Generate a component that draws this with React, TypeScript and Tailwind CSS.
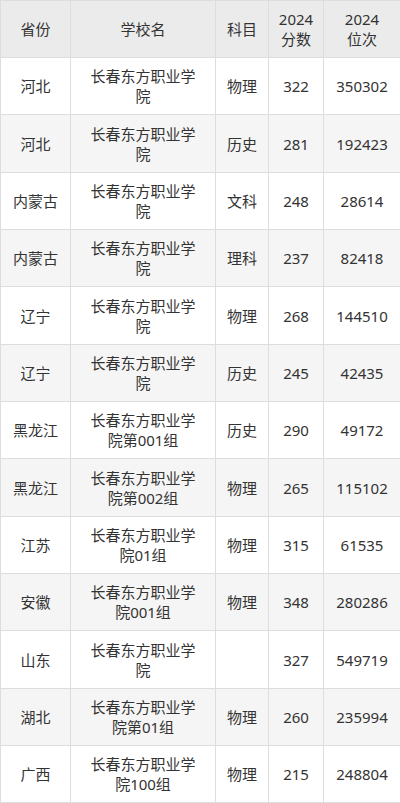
import React from "react";

const rows: [string, string, string, string, string][] = [
  ["河北", "长春东方职业学院", "物理", "322", "350302"],
  ["河北", "长春东方职业学院", "历史", "281", "192423"],
  ["内蒙古", "长春东方职业学院", "文科", "248", "28614"],
  ["内蒙古", "长春东方职业学院", "理科", "237", "82418"],
  ["辽宁", "长春东方职业学院", "物理", "268", "144510"],
  ["辽宁", "长春东方职业学院", "历史", "245", "42435"],
  ["黑龙江", "长春东方职业学院第001组", "历史", "290", "49172"],
  ["黑龙江", "长春东方职业学院第002组", "物理", "265", "115102"],
  ["江苏", "长春东方职业学院01组", "物理", "315", "61535"],
  ["安徽", "长春东方职业学院001组", "物理", "348", "280286"],
  ["山东", "长春东方职业学院", "", "327", "549719"],
  ["湖北", "长春东方职业学院第01组", "物理", "260", "235994"],
  ["广西", "长春东方职业学院100组", "物理", "215", "248804"],
];

const cell = "border border-[#dddddd] text-center align-middle px-[6px] py-0";

export default function App() {
  return (
    <div
      className="w-[400px] bg-white text-[#333333] text-[15px] leading-[20px]"
      style={{ fontFamily: '"Noto Sans", "Noto Sans CJK SC", sans-serif' }}
    >
      <table className="w-[400px] border-collapse table-fixed">
        <colgroup>
          <col className="w-[70px]" />
          <col className="w-[145px]" />
          <col className="w-[53px]" />
          <col className="w-[55px]" />
          <col className="w-[77px]" />
        </colgroup>
        <thead>
          <tr className="h-[57px] bg-[#ebebeb]">
            <th className={cell + " font-normal"}>省份</th>
            <th className={cell + " font-normal"}>学校名</th>
            <th className={cell + " font-normal"}>科目</th>
            <th className={cell + " font-normal"}>
              2024
              <br />
              分数
            </th>
            <th className={cell + " font-normal"}>
              2024
              <br />
              位次
            </th>
          </tr>
        </thead>
        <tbody>
          {rows.map((r, i) => (
            <tr
              key={i}
              className={"h-[57.35px] " + (i % 2 === 1 ? "bg-[#f5f5f5]" : "bg-white")}
            >
              <td className={cell}>{r[0]}</td>
              <td className={cell + " px-[16px]"}>{r[1]}</td>
              <td className={cell}>{r[2]}</td>
              <td className={cell}>{r[3]}</td>
              <td className={cell}>{r[4]}</td>
            </tr>
          ))}
        </tbody>
      </table>
    </div>
  );
}
